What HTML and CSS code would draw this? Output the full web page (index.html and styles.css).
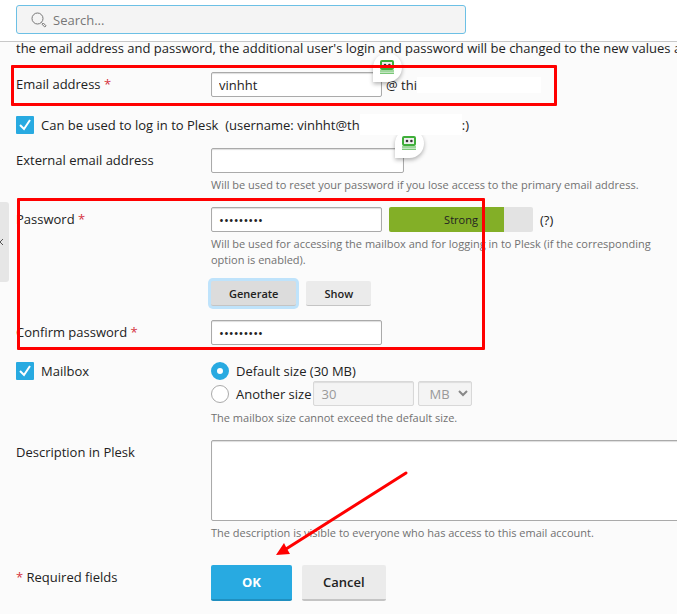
FILE: index.html
```html
<!DOCTYPE html>
<html lang="en">
<head>
    <meta charset="UTF-8">
    <meta name="viewport" content="width=device-width, initial-scale=1.0">
    <title>Create Email Address</title>
    <link rel="stylesheet" href="styles.css">
</head>
<body>
    <header class="topbar">
        <div class="search">
            <svg class="search-icon" viewBox="0 0 16 16" width="16" height="16">
                <circle cx="6.5" cy="6.5" r="5.5"/>
                <path d="M10.5 10.5l1 1M11 12.3l1.3-1.3 2.7 2.8-1.2 1.2z"/>
            </svg>
            <input type="text" class="search-input" placeholder="Search..." aria-label="Search">
        </div>
    </header>

    <button class="sidebar-toggle" type="button" aria-label="Toggle sidebar">
        <svg viewBox="0 0 5 8" width="5" height="8"><path d="M3 1L0 4l3 3"/></svg>
    </button>

    <main class="content">
        <p class="intro">the email address and password, the additional user's login and password will be changed to the new values as well.</p>

        <form>
            <div class="row">
                <label class="name" for="email">Email address <span class="req">*</span></label>
                <div class="line">
                    <span class="filled">
                        <input type="text" id="email" class="text medium" value="vinhht">
                        <span class="robot"><svg viewBox="0 0 14 14" width="14" height="14"><rect class="head" x="1" y="1" width="12" height="8" rx="1"/><circle cx="5" cy="5" r="1.3"/><circle cx="9.400" cy="5" r="1.3"/><path d="M0 11h14M0 13.200h14"/></svg></span>
                    </span>
                    <span class="domain">@ thi</span><span class="blank"></span>
                </div>
            </div>

            <div class="row-login">
                <input type="checkbox" id="login" class="check" checked>
                <label for="login">Can be used to log in to Plesk&nbsp; (username: vinhht@th</label><span class="blank blank-user"></span><span>:)</span>
            </div>

            <div class="row">
                <label class="name" for="external">External email address</label>
                <div>
                    <span class="filled">
                        <input type="text" id="external" class="text wide">
                        <span class="robot"><svg viewBox="0 0 14 14" width="14" height="14"><rect class="head" x="1" y="1" width="12" height="8" rx="1"/><circle cx="5" cy="5" r="1.3"/><circle cx="9.400" cy="5" r="1.3"/><path d="M0 11h14M0 13.200h14"/></svg></span>
                    </span>
                    <p class="hint">Will be used to reset your password if you lose access to the primary email address.</p>
                </div>
            </div>

            <div class="row">
                <label class="name" for="password">Password <span class="req">*</span></label>
                <div>
                    <div class="line">
                        <input type="password" id="password" class="text medium" value="secret123">
                        <div class="strength"><span>Strong</span></div>
                        <span class="help">(?)</span>
                    </div>
                    <p class="hint">Will be used for accessing the mailbox and for logging in to Plesk (if the corresponding option is enabled).</p>
                    <div class="buttons small">
                        <button type="button" class="btn focused">Generate</button>
                        <button type="button" class="btn">Show</button>
                    </div>
                </div>
            </div>

            <div class="row">
                <label class="name" for="confirm">Confirm password <span class="req">*</span></label>
                <div class="line">
                    <input type="password" id="confirm" class="text medium" value="secret123">
                </div>
            </div>

            <div class="row row-mailbox">
                <div class="line option">
                    <input type="checkbox" id="mailbox" class="check" checked>
                    <label for="mailbox">Mailbox</label>
                </div>
                <div>
                    <div class="line option">
                        <input type="radio" id="size-default" name="size" class="radio" checked>
                        <label for="size-default">Default size (30 MB)</label>
                    </div>
                    <div class="line">
                        <input type="radio" id="size-other" name="size" class="radio">
                        <label for="size-other">Another size</label>
                        <input type="text" class="text quota" value="30" aria-label="Mailbox size" disabled>
                        <select class="unit" aria-label="Size unit" disabled>
                            <option>MB</option>
                        </select>
                    </div>
                    <p class="hint">The mailbox size cannot exceed the default size.</p>
                </div>
            </div>

            <div class="row">
                <label class="name" for="description">Description in Plesk</label>
                <div>
                    <textarea id="description" class="description"></textarea>
                    <p class="hint">The description is visible to everyone who has access to this email account.</p>
                </div>
            </div>

            <div class="row row-submit">
                <div class="name"><span class="req">*</span> Required fields</div>
                <div class="buttons">
                    <button type="submit" class="btn primary">OK</button>
                    <button type="button" class="btn">Cancel</button>
                </div>
            </div>
        </form>
    </main>

    <!-- highlights drawn over the form -->
    <div class="mark mark-email"></div>
    <div class="mark mark-password"></div>
    <svg class="arrow" viewBox="0 0 140 90" width="140" height="90">
        <path class="shaft" d="M136 7L16 83"/>
        <path class="tip" d="M6 89L14 77 16 81 20 88z"/>
    </svg>
</body>
</html>
```
FILE: styles.css
```css
* {
    box-sizing: border-box;
}
body {
    margin: 0;
    position: relative;
    overflow-x: hidden;
    background-color: #fbfbfb;
    color: #222;
    font-family: "Open Sans", sans-serif;
    font-size: 13px;
    line-height: 18px;
}
input, select, textarea, button {
    font-family: inherit;
    font-size: 13px;
    color: inherit;
    margin: 0;
}
p {
    margin: 0;
}
.topbar {
    height: 42px;
    padding: 5px 16px;
    background-color: #fff;
    border-bottom: 1px solid #c8c8c8;
}
.search {
    display: flex;
    align-items: center;
    max-width: 450px;
    height: 29px;
    padding-left: 14px;
    background-color: #f4f4f4;
    border: 1px solid #6cc0e5;
    border-radius: 3px;
}
.search-icon {
    fill: none;
    stroke: #777;
    stroke-width: 1;
}
.search-input {
    flex: 1;
    padding: 0 6px;
    border: none;
    background: none;
    outline: none;
}
.search-input::placeholder {
    color: #777;
}
.sidebar-toggle {
    position: absolute;
    left: 0;
    top: 202px;
    width: 9px;
    height: 80px;
    padding: 0;
    border: none;
    border-radius: 0 3px 3px 0;
    background-color: #e6e6e6;
    text-align: left;
}
.sidebar-toggle svg {
    display: block;
    fill: none;
    stroke: #555;
}
.content {
    padding-left: 16px;
    overflow: hidden;
}
.intro {
    line-height: 12px;
    margin-bottom: 18px;
    white-space: nowrap;
}
.row {
    display: grid;
    grid-template-columns: 195px 1fr;
    margin-bottom: 14px;
}
.name {
    line-height: 25px;
}
.req {
    color: #d5323e;
}
.line {
    display: flex;
    align-items: center;
    height: 25px;
}
.text {
    height: 25px;
    padding: 0 7px;
    background-color: #fff;
    border: 1px solid #aaa;
    border-radius: 2px;
    box-shadow: inset 0 1px 1px #ddd;
}
.medium {
    width: 171px;
}
.wide {
    width: 193px;
}
.filled {
    display: inline-flex;
    position: relative;
    vertical-align: top;
}

/* form filler badge on the corner of a field */
.robot {
    position: absolute;
    right: -20px;
    top: -19px;
    width: 29px;
    height: 29px;
    padding: 7px;
    background-color: #fff;
    border-radius: 50% 50% 50% 0;
    box-shadow: 0 2px 4px rgba(0, 0, 0, 0.3);
}
.robot svg {
    display: block;
    fill: #333;
    stroke: none;
}
.robot .head {
    fill: #eee;
    stroke: #3fae3a;
    stroke-width: 2;
}
.robot path {
    stroke: #3fae3a;
    stroke-width: 1;
}
.domain {
    margin-left: 4px;
}
.blank {
    width: 124px;
    height: 16px;
    background-color: #fff;
}
.blank-user {
    position: relative;
    z-index: 1;
    width: 102px;
    height: 21px;
}
.row-login {
    display: flex;
    align-items: center;
    height: 27px;
    margin-bottom: 10px;
}
.check, .radio {
    appearance: none;
    flex: none;
    width: 18px;
    height: 18px;
    margin-right: 7px;
}
.check {
    border-radius: 1px;
    background: #28aae1 url("data:image/svg+xml,%3Csvg xmlns='http://www.w3.org/2000/svg' viewBox='0 0 18 18'%3E%3Cpath d='M4 9l4 4 6-9' fill='none' stroke='white' stroke-width='2'/%3E%3C/svg%3E");
}
.radio {
    border: 1px solid #aaa;
    border-radius: 50%;
    background-color: #fff;
}
.radio:checked {
    border: 6px solid #28aae1;
}
.hint {
    max-width: 450px;
    margin-top: 4px;
    font-size: 11px;
    line-height: 16px;
    color: #717171;
}
.strength {
    width: 144px;
    height: 25px;
    margin: 0 7px;
    border-radius: 2px;
    background: linear-gradient(to right, #83af27 80%, #e3e3e3 80%);
    font-size: 11px;
    line-height: 25px;
    text-align: center;
}
.buttons {
    display: flex;
    gap: 10px;
}
.btn {
    height: 36px;
    padding: 0 21px;
    border: none;
    border-bottom: 2px solid #c4c4c4;
    border-radius: 2px;
    background-color: #ebebeb;
    font-weight: 600;
}
.primary {
    padding: 0 31px;
    border-color: #1f8fc0;
    background-color: #28aae1;
    color: #fff;
    font-weight: 700;
}
.small {
    margin-top: 13px;
}
.small .btn {
    height: 25px;
    padding: 0 18px;
    border-bottom-width: 1px;
    font-size: 11px;
}
.small .focused {
    background-color: #dcdcdc;
    box-shadow: 0 0 0 3px #bfe3fb;
}
.row-mailbox {
    margin-top: 16px;
}
.option {
    height: 20px;
}
.quota {
    width: 101px;
    margin: 0 4px 0 2px;
}
.quota, .unit {
    border: 1px solid #d8d8d8;
    background-color: #f4f4f4;
    color: #999;
}
.unit {
    appearance: none;
    width: 54px;
    height: 25px;
    padding: 0 10px;
    border-radius: 2px;
    box-shadow: inset 0 1px 1px #ddd;
    background-image: url("data:image/svg+xml,%3Csvg xmlns='http://www.w3.org/2000/svg' width='10' height='7'%3E%3Cpath d='M1 1l4 4 4-4' fill='none' stroke='%23888' stroke-width='2'/%3E%3C/svg%3E");
    background-repeat: no-repeat;
    background-position: right 3px center;
    opacity: 1;
}
.description {
    display: block;
    width: calc(100% + 10px);
    height: 81px;
    border: 1px solid #aaa;
    border-radius: 2px;
    background-color: #fff;
    box-shadow: inset 0 1px 1px #ddd;
    resize: none;
}
.row-submit {
    margin-top: 24px;
    margin-bottom: 12px;
}
.mark {
    position: absolute;
    z-index: 2;
    border: 3px solid #f00;
    border-radius: 1px;
    pointer-events: none;
}
.mark-email {
    left: 11px;
    top: 65px;
    width: 546px;
    height: 41px;
}
.mark-password {
    left: 17px;
    top: 198px;
    width: 468px;
    height: 152px;
}
.arrow {
    position: absolute;
    left: 270px;
    top: 466px;
    pointer-events: none;
}
.shaft {
    stroke: #f00;
    stroke-width: 3;
    stroke-linecap: round;
}
.tip {
    fill: #f00;
}
```
